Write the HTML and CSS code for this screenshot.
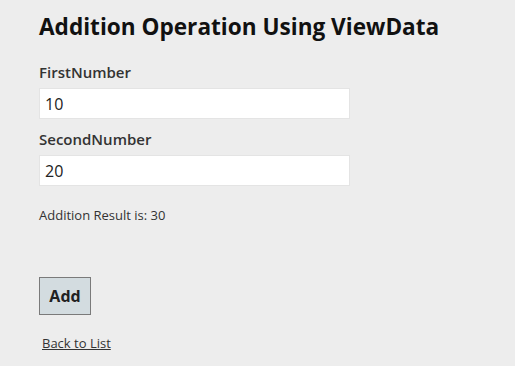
FILE: index.html
```html
<!DOCTYPE html>
<html lang="en">
<head>
    <meta charset="UTF-8">
    <meta name="viewport" content="width=device-width, initial-scale=1.0">
    <title>Addition</title>
    <link rel="stylesheet" href="styles.css">
</head>
<body>

    <div class="page">
        <h2 class="title">Addition Operation Using ViewData</h2>

        <form class="calc-form">
            <label class="field-label" for="first">FirstNumber</label>
            <input class="field-input" type="text" id="first" name="first" value="10">

            <label class="field-label" for="second">SecondNumber</label>
            <input class="field-input" type="text" id="second" name="second" value="20">

            <div class="result">Addition Result is: 30</div>

            <button class="add-btn" type="button">Add</button>
        </form>

        <div class="back-link"><a href="#">Back to List</a></div>
    </div>

</body>
</html>
```

FILE: styles.css
```css
body {
    font-family: 'Open Sans', 'Noto Sans', sans-serif;
    background-color: #ededed;
    color: #333;
    margin: 0;
    padding: 0;
}

.page {
    padding: 12px 39px 0;
}

.title {
    font-size: 22.6px;
    font-weight: bold;
    color: #111;
    margin: 0 0 20px;
    line-height: 30px;
}

.calc-form {
    display: flex;
    flex-direction: column;
    align-items: flex-start;
}

.field-label {
    font-size: 15px;
    font-weight: 600;
    line-height: 20px;
    margin-bottom: 6px;
    color: #333;
}

.field-input {
    width: 311px;
    height: 31px;
    box-sizing: border-box;
    padding: 0 5px;
    border: 1px solid #e4e4e4;
    background-color: #fff;
    font-family: inherit;
    font-size: 16px;
    color: #222;
    margin-bottom: 10px;
}

.result {
    font-size: 13px;
    margin-top: 10px;
    line-height: 18px;
}

.add-btn {
    margin-top: 53px;
    width: 52px;
    height: 38px;
    background-color: #d3dce0;
    border: 1px solid #7a7a7a;
    font-family: inherit;
    font-size: 16px;
    font-weight: bold;
    color: #222;
    padding: 0;
    cursor: pointer;
}

.back-link {
    margin-top: 19px;
    padding-left: 3px;
    font-size: 13px;
}

.back-link a {
    color: #333;
}
```
